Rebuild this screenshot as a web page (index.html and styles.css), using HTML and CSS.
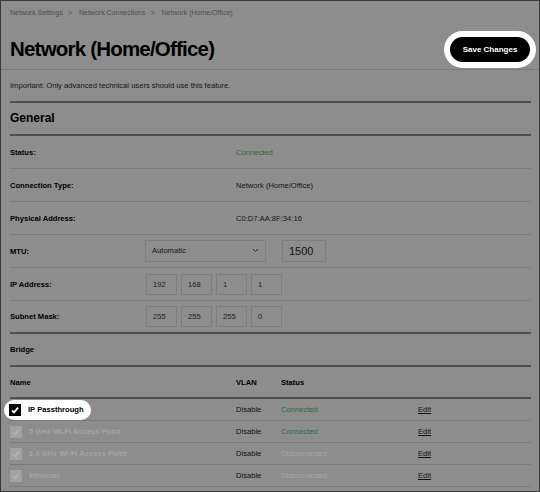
FILE: index.html
```html
<!DOCTYPE html>
<html lang="en">
<head>
    <meta charset="UTF-8">
    <title>Network (Home/Office)</title>
    <link rel="stylesheet" href="styles.css">
</head>
<body>
    <div class="page">
        <div class="crumbs">
            <span>Network Settings</span><span class="sep">&gt;</span>
            <span>Network Connections</span><span class="sep">&gt;</span>
            <span>Network (Home/Office)</span>
        </div>

        <div class="header">
            <h1 class="title">Network (Home/Office)</h1>
            <button class="save-btn">Save Changes</button>
        </div>

        <div class="notice">Important: Only advanced technical users should use this feature.</div>

        <div class="section-title thick">General</div>

        <div class="rows thick">
            <div class="row">
                <div class="label wide">Status:</div>
                <div class="value green">Connected</div>
            </div>
            <div class="row">
                <div class="label wide">Connection Type:</div>
                <div class="value">Network (Home/Office)</div>
            </div>
            <div class="row">
                <div class="label wide">Physical Address:</div>
                <div class="value">C0:D7:AA:8F:34:16</div>
            </div>
            <div class="row">
                <div class="label">MTU:</div>
                <div class="select">
                    <span>Automatic</span>
                    <svg width="7" height="5" viewBox="0 0 7 5"><polyline points="1,1 3.5,3.5 6,1" fill="none" stroke="#333" stroke-width="1"/></svg>
                </div>
                <div class="field mtu">1500</div>
            </div>
            <div class="row">
                <div class="label">IP Address:</div>
                <div class="octets">
                    <div class="field">192</div>
                    <div class="field">168</div>
                    <div class="field">1</div>
                    <div class="field">1</div>
                </div>
            </div>
            <div class="row last">
                <div class="label">Subnet Mask:</div>
                <div class="octets">
                    <div class="field">255</div>
                    <div class="field">255</div>
                    <div class="field">255</div>
                    <div class="field">0</div>
                </div>
            </div>
        </div>

        <div class="section-title small thick">Bridge</div>

        <div class="table thick">
            <div class="trow head">
                <div>Name</div>
                <div>VLAN</div>
                <div>Status</div>
                <div></div>
            </div>
            <div class="trow">
                <div>
                    <span class="spot">
                        <span class="check"><svg width="12" height="12" viewBox="0 0 12 12"><polyline points="3,6.3 5.1,8.4 9,3.6" fill="none" stroke="#fff" stroke-width="1.8"/></svg></span>
                        <span class="name">IP Passthrough</span>
                    </span>
                </div>
                <div class="vlan">Disable</div>
                <div class="green">Connected</div>
                <div><a class="edit">Edit</a></div>
            </div>
            <div class="trow">
                <div class="off-cell">
                    <span class="check off"><svg width="12" height="12" viewBox="0 0 12 12"><polyline points="3,6.3 5.1,8.4 9,3.6" fill="none" stroke="#b4b4b4" stroke-width="1.6"/></svg></span>
                    <span class="name off">5 GHz Wi-Fi Access Point</span>
                </div>
                <div class="vlan">Disable</div>
                <div class="green">Connected</div>
                <div><a class="edit">Edit</a></div>
            </div>
            <div class="trow">
                <div class="off-cell">
                    <span class="check off"><svg width="12" height="12" viewBox="0 0 12 12"><polyline points="3,6.3 5.1,8.4 9,3.6" fill="none" stroke="#b4b4b4" stroke-width="1.6"/></svg></span>
                    <span class="name off">2.4 GHz Wi-Fi Access Point</span>
                </div>
                <div class="vlan">Disable</div>
                <div class="grey">Disconnected</div>
                <div><a class="edit">Edit</a></div>
            </div>
            <div class="trow">
                <div class="off-cell">
                    <span class="check off"><svg width="12" height="12" viewBox="0 0 12 12"><polyline points="3,6.3 5.1,8.4 9,3.6" fill="none" stroke="#b4b4b4" stroke-width="1.6"/></svg></span>
                    <span class="name off">Ethernet</span>
                </div>
                <div class="vlan">Disable</div>
                <div class="grey">Disconnected</div>
                <div><a class="edit">Edit</a></div>
            </div>
        </div>
    </div>
</body>
</html>
```

FILE: styles.css
```css
/* Page reset */
body, html {
    margin: 0;
    padding: 0;
    font-family: "Liberation Sans", Arial, sans-serif;
    color: #111;
}

/* Dimmed page frame */
.page {
    width: 540px;
    height: 492px;
    box-sizing: border-box;
    border: 1px solid #3a3a3a;
    background: #8d8d8d;
    overflow: hidden;
}

/* Breadcrumb */
.crumbs {
    height: 24px;
    line-height: 24px;
    padding-left: 9px;
    font-size: 7px;
    color: #4e4e4e;
}

.crumbs .sep {
    margin: 0 5px;
}

/* Header with title and save button */
.header {
    height: 45px;
    box-sizing: border-box;
    padding: 4px 9px 0 9px;
    display: flex;
    justify-content: space-between;
    align-items: center;
    border-bottom: 1px solid #7b7b7b;
}

.title {
    margin: 0;
    font-size: 20.5px;
    font-weight: 700;
    letter-spacing: -0.8px;
    color: #000;
}

.save-btn {
    width: 80px;
    height: 25px;
    border: none;
    border-radius: 13px;
    background: #000;
    color: #fff;
    font-family: inherit;
    font-size: 8px;
    font-weight: 700;
    box-shadow: 0 0 0 6px #fff;
}

.notice {
    height: 31px;
    line-height: 31px;
    padding-left: 9px;
    font-size: 7.6px;
    color: #151515;
}

/* Thick section dividers */
.thick {
    margin: 0 8px 0 9px;
    border-top: 2px solid #4f4f4f;
}

.section-title {
    height: 31px;
    line-height: 31px;
    font-size: 12px;
    font-weight: 700;
    color: #000;
}

.section-title.small {
    font-size: 7.6px;
}

/* General settings rows */
.row {
    height: 33px;
    box-sizing: border-box;
    display: flex;
    align-items: center;
    border-bottom: 1px solid #7b7b7b;
    font-size: 7.6px;
}

.row.last {
    border-bottom: none;
    height: 31px;
}

.label {
    width: 135px;
    flex-shrink: 0;
    font-weight: 700;
    color: #000;
}

.label.wide {
    width: 226px;
}

.value {
    color: #151515;
}

.green {
    color: #2f6b3f;
}

.grey {
    color: #a8a8a8;
}

.select {
    width: 121px;
    height: 22px;
    box-sizing: border-box;
    border: 1px solid #7d7d7d;
    display: flex;
    justify-content: space-between;
    align-items: center;
    padding: 0 6px 2px 6px;
    color: #151515;
}

.field {
    width: 31px;
    height: 21px;
    box-sizing: border-box;
    border: 1px solid #7d7d7d;
    padding-left: 6px;
    display: flex;
    align-items: center;
    color: #222;
}

.field.mtu {
    width: 44px;
    height: 22px;
    margin-left: 16px;
    font-size: 11px;
    color: #111;
}

.octets {
    display: flex;
    gap: 4px;
    margin-left: 1px;
}

/* Bridge table */
.trow {
    display: grid;
    grid-template-columns: 226px 45px 137px 1fr;
    align-items: center;
    height: 22px;
    box-sizing: border-box;
    border-bottom: 1px solid #7b7b7b;
    font-size: 7.6px;
}

.trow.head {
    height: 32px;
    border-bottom: 2px solid #4f4f4f;
    font-weight: 700;
    color: #000;
}

.vlan {
    color: #111;
}

.edit {
    color: #111;
    text-decoration: underline;
}

.spot {
    display: inline-flex;
    align-items: center;
    gap: 7px;
    margin-left: -6px;
    padding: 0 7px 0 5px;
    height: 20px;
    border-radius: 10px;
    background: #fff;
}

.off-cell {
    display: flex;
    align-items: center;
    gap: 7px;
}

.check {
    width: 12px;
    height: 12px;
    background: #000;
    display: flex;
}

.check.off {
    background: #a2a2a2;
}

.name {
    font-weight: 700;
    color: #000;
}

.name.off {
    color: #a4a4a4;
}
```
